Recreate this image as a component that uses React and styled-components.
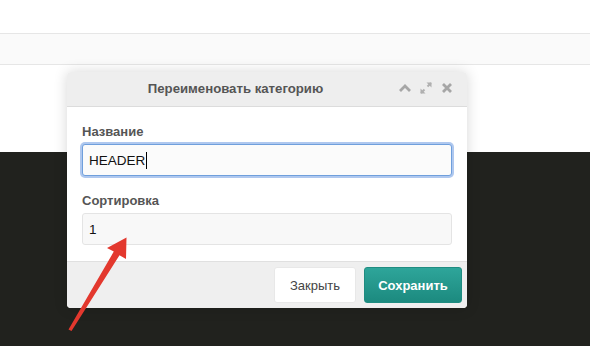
import React from "react";
import styled, { createGlobalStyle } from "styled-components";

const GlobalStyle = createGlobalStyle`
  html, body {
    margin: 0;
    padding: 0;
    background: #fff;
    font-family: "Liberation Sans", Arial, sans-serif;
  }
`;

const Page = styled.div`
  position: relative;
  width: 590px;
  height: 346px;
  overflow: hidden;
  display: flex;
  flex-direction: column;
`;

const TopSpace = styled.div`
  height: 33px;
  background: #fff;
`;

const Band = styled.div`
  height: 30px;
  background: #fafafa;
  border-top: 1px solid #e6e6e6;
  border-bottom: 1px solid #e6e6e6;
`;

const WhiteArea = styled.div`
  height: 87px;
  background: #fff;
`;

const DarkArea = styled.div`
  flex: 1;
  background: #21221e;
`;

const Modal = styled.div`
  position: absolute;
  left: 67px;
  top: 72px;
  width: 400px;
  background: #fff;
  border-radius: 4px;
  overflow: hidden;
  box-shadow: 0 0 14px rgba(0, 0, 0, 0.16);
  display: flex;
  flex-direction: column;
`;

const Header = styled.div`
  position: relative;
  box-sizing: border-box;
  height: 35px;
  padding-bottom: 2px;
  background: #eeeeee;
  border-bottom: 1px solid #dcdcdc;
  display: flex;
  align-items: center;
  justify-content: center;
`;

const Title = styled.div`
  font-size: 13.2px;
  font-weight: 700;
  color: #555;
  margin-left: -63px;
`;

const Tools = styled.div`
  position: absolute;
  right: 13px;
  top: 0;
  height: 100%;
  display: flex;
  align-items: center;
  gap: 7px;
  padding-bottom: 2px;
  box-sizing: border-box;
`;

const Tool = styled.svg`
  width: 14px;
  height: 14px;
  display: block;
`;

const Body = styled.div`
  padding: 16px 15px 16px;
  display: flex;
  flex-direction: column;
`;

const Label = styled.div`
  font-size: 13px;
  font-weight: 700;
  color: #555;
  line-height: 18px;
  margin-bottom: ${p => p.$gap}px;
`;

const Field = styled.div`
  box-sizing: border-box;
  height: 32px;
  padding: 0 6px;
  display: flex;
  align-items: center;
  font-size: 13.5px;
  color: #111;
  background: ${p => (p.$focused ? "#fbfbfb" : "#f8f8f8")};
  border: 1px solid ${p => (p.$focused ? "#6f9fdc" : "#e4e4e4")};
  border-radius: 3px;
  box-shadow: ${p => (p.$focused ? "0 0 0 2px rgba(110, 155, 225, 0.55)" : "none")};
  margin-bottom: ${p => p.$gap}px;
`;

const Caret = styled.span`
  display: inline-block;
  width: 1px;
  height: 17px;
  background: #000;
  margin-left: 1px;
`;

const Footer = styled.div`
  height: 46px;
  background: #efefef;
  border-top: 1px solid #e0e0e0;
  display: flex;
  align-items: center;
  justify-content: flex-end;
  gap: 8px;
  padding: 0 5px;
`;

const Button = styled.button`
  height: 36px;
  border-radius: 3px;
  font-family: "Liberation Sans", Arial, sans-serif;
  font-size: 13px;
  cursor: pointer;
  padding: 0;
  width: ${p => p.$w}px;
  ${p =>
    p.$primary
      ? `
    background: linear-gradient(#2ea59a, #1c8a7f);
    border: 1px solid #1f8c81;
    color: #fff;
    font-weight: 700;
  `
      : `
    background: #fff;
    border: 1px solid #e8e8e8;
    color: #444;
  `}
`;

const Arrow = styled.svg`
  position: absolute;
  left: 0;
  top: 0;
  width: 590px;
  height: 346px;
  pointer-events: none;
`;

const App = () => (
  <>
    <GlobalStyle />
    <Page>
      <TopSpace />
      <Band />
      <WhiteArea />
      <DarkArea />
      <Modal>
        <Header>
          <Title>Переименовать категорию</Title>
          <Tools>
            <Tool viewBox="0 0 14 14">
              <path d="M2 10 L7 5 L12 10" fill="none" stroke="#a6a6a6" strokeWidth="2.8" />
            </Tool>
            <Tool viewBox="0 0 14 14">
              <path d="M2 12 L5.5 8.5" stroke="#b0b0b0" strokeWidth="2" />
              <path d="M1.5 12.5 L1.5 7.5 L6.5 12.5 Z" fill="#b0b0b0" />
              <path d="M8.5 5.5 L12 2" stroke="#b0b0b0" strokeWidth="2" />
              <path d="M12.5 1.5 L12.5 6.5 L7.5 1.5 Z" fill="#b0b0b0" />
            </Tool>
            <Tool viewBox="0 0 14 14">
              <path d="M3 3 L11 11 M11 3 L3 11" stroke="#a6a6a6" strokeWidth="2.8" />
            </Tool>
          </Tools>
        </Header>
        <Body>
          <Label $gap={3}>Название</Label>
          <Field $focused $gap={16}>
            HEADER
            <Caret />
          </Field>
          <Label $gap={3}>Сортировка</Label>
          <Field $gap={0}>1</Field>
        </Body>
        <Footer>
          <Button $w={82}>Закрыть</Button>
          <Button $primary $w={98}>Сохранить</Button>
        </Footer>
      </Modal>
      <Arrow viewBox="0 0 590 346">
        <polygon
          points="126.5,237.5 126,259 119.5,255.2 71.5,331 68.5,329.5 113.8,251.6 107,248"
          fill="#e3382e"
        />
      </Arrow>
    </Page>
  </>
);

export default App;
